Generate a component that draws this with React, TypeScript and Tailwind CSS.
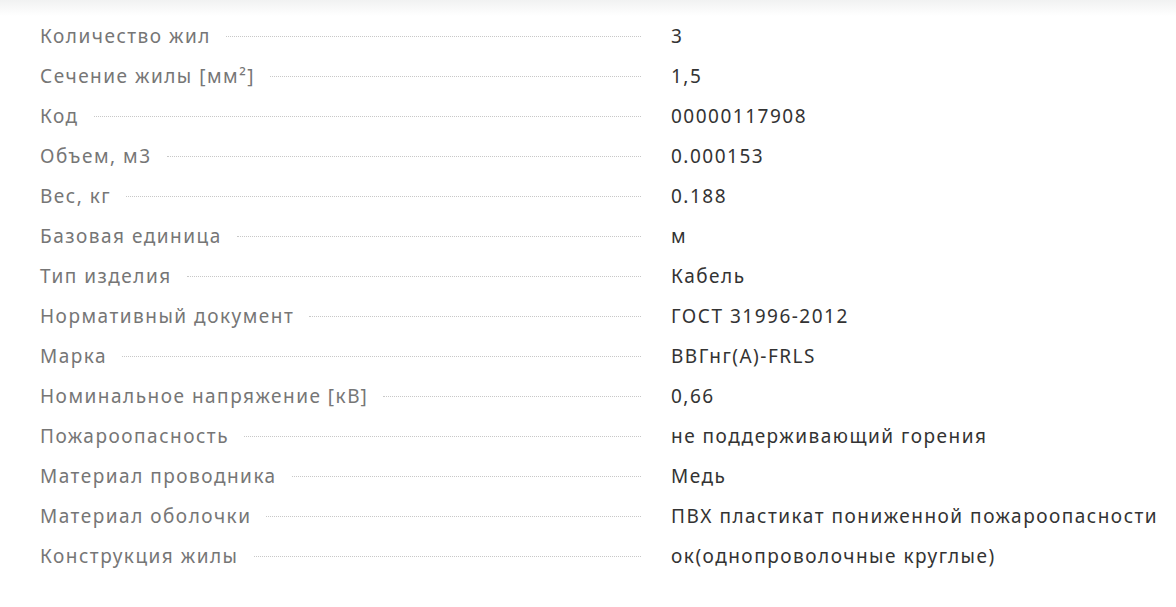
const rows: [string, string][] = [
  ["Количество жил", "3"],
  ["Сечение жилы [мм²]", "1,5"],
  ["Код", "00000117908"],
  ["Объем, м3", "0.000153"],
  ["Вес, кг", "0.188"],
  ["Базовая единица", "м"],
  ["Тип изделия", "Кабель"],
  ["Нормативный документ", "ГОСТ 31996-2012"],
  ["Марка", "ВВГнг(А)-FRLS"],
  ["Номинальное напряжение [кВ]", "0,66"],
  ["Пожароопасность", "не поддерживающий горения"],
  ["Материал проводника", "Медь"],
  ["Материал оболочки", "ПВХ пластикат пониженной пожароопасности"],
  ["Конструкция жилы", "ок(однопроволочные круглые)"],
]

export default function App() {
  return (
    <div className="min-h-[607px] bg-white font-['Noto_Sans',sans-serif] text-[19px] tracking-[1.5px]">
      <div className="h-[16px] bg-gradient-to-b from-[#f1f2f2] to-white" />
      <div className="pl-10">
        {rows.map(([label, value]) => (
          <div key={label} className="grid h-10 grid-cols-[601px_1fr] items-center gap-[30px]">
            <div className="flex items-center gap-[15px]">
              <span className="whitespace-nowrap text-[#767676]">{label}</span>
              <span className="mt-[1px] flex-1 border-b border-dotted border-[#c8c8c8]" />
            </div>
            <span className="whitespace-nowrap text-[#333]">{value}</span>
          </div>
        ))}
      </div>
    </div>
  )
}
